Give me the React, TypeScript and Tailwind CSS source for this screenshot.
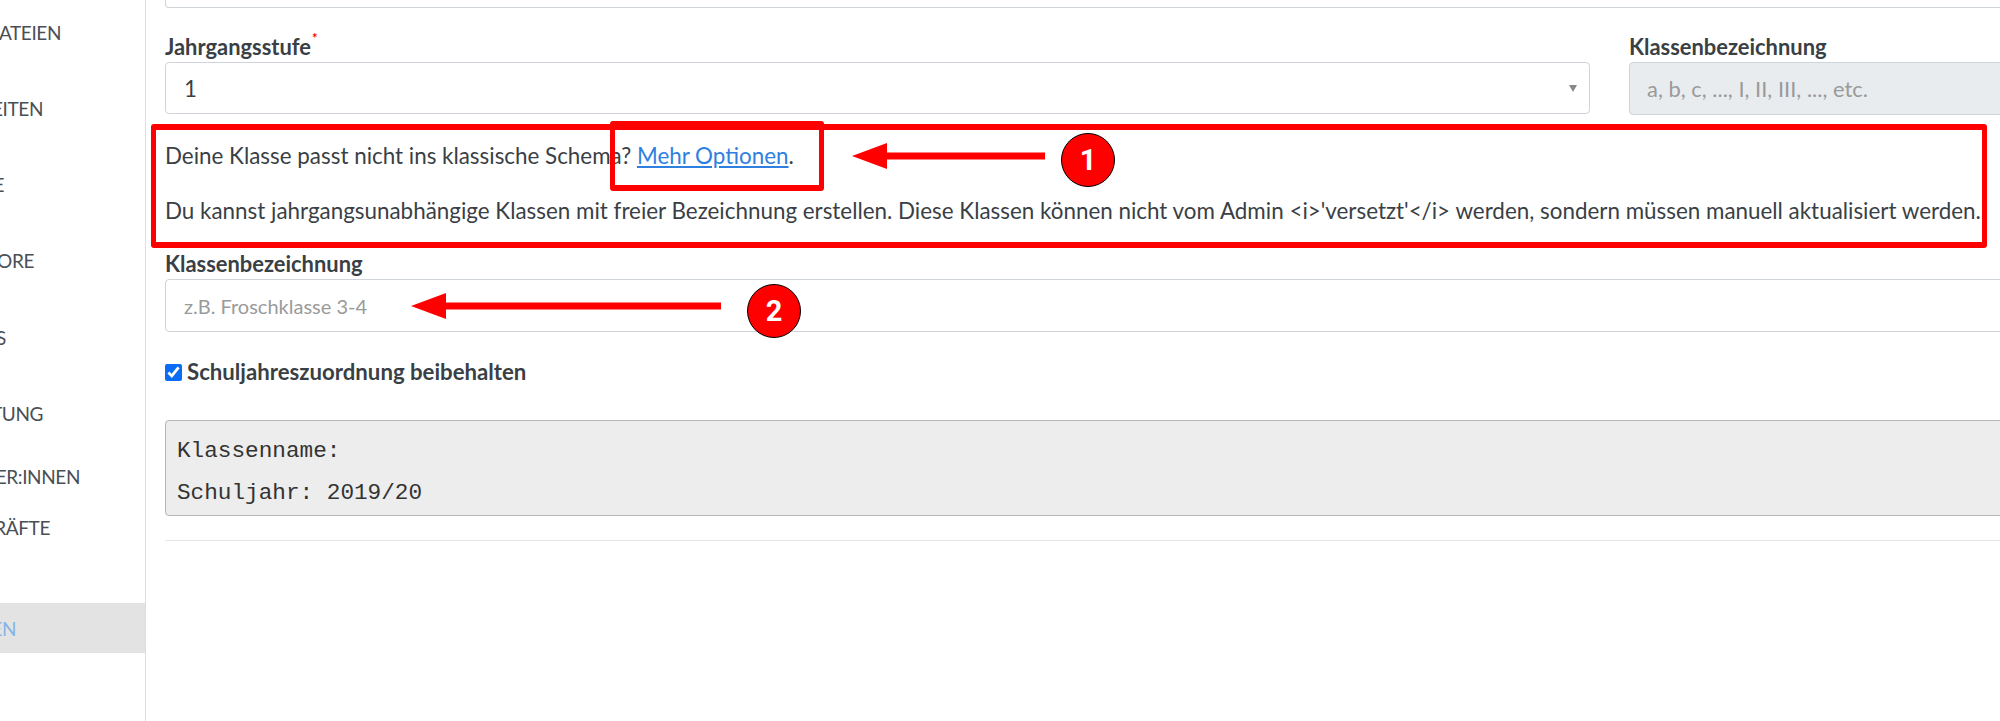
const sidebarItems = [
  { label: "ATEIEN", top: "mt-[7px]", width: "w-[61px]" },
  { label: "EITEN", top: "mt-[26px]", width: "w-[43px]" },
  { label: "E", top: "mt-[26px]", width: "w-[4px]" },
  { label: "ORE", top: "mt-[26px]", width: "w-[34px]" },
  { label: "S", top: "mt-[27px]", width: "w-[6px]" },
  { label: "TUNG", top: "mt-[26px]", width: "w-[43px]" },
  { label: "ER:INNEN", top: "mt-[13px]", width: "w-[80px]" },
  { label: "RÄFTE", top: "mt-[1px]", width: "w-[50px]" },
];

function Sidebar() {
  return (
    <aside className="w-[146px] shrink-0 border-r border-[#dedede] text-[19px] leading-none tracking-[-0.4px] text-[#4a4f55]">
      {sidebarItems.map((item) => (
        <div key={item.label} className={`flex h-[50px] items-center ${item.top}`}>
          <div className={`flex justify-end whitespace-nowrap ${item.width}`}>{item.label}</div>
        </div>
      ))}
      <div className="mt-[51px] flex h-[50px] items-center bg-[#e3e3e3] text-[#86b3e6]">
        <div className="flex w-[16px] justify-end">EN</div>
      </div>
    </aside>
  );
}

function Arrow({ className, width }: { className: string; width: number }) {
  return (
    <svg className={`absolute ${className}`} width={width} height={26} viewBox={`0 0 ${width} 26`}>
      <polygon points={`0,13 35,0 35,9.5 ${width},9.5 ${width},16.5 35,16.5 35,26`} fill="#ff0000" />
    </svg>
  );
}

function Badge({ className, n }: { className: string; n: number }) {
  return (
    <div
      className={`absolute flex h-[54px] w-[54px] items-center justify-center rounded-full border border-black bg-[#ff0000] text-[29px] font-bold text-white [font-family:Roboto,sans-serif] ${className}`}
    >
      {n}
    </div>
  );
}

export default function App() {
  return (
    <div className="relative flex h-[721px] w-[2000px] overflow-hidden bg-white text-[22.4px] leading-[30px] text-[#3a3f45] [font-family:Lato,sans-serif]">
      <Sidebar />
      <main className="min-w-0 flex-1 pl-[19px]">
        <div className="-mr-2 h-[8px] rounded-b border border-t-0 border-[#ced4da]" />

        <div className="mt-[23px] grid grid-cols-[1425px_1fr] gap-x-[39px]">
          <div>
            <label className="relative block h-[31px] pt-px text-[21.9px] font-bold">
              Jahrgangsstufe
              <span className="absolute left-[147px] top-[-8px] text-[13px] text-[#ff0000]">*</span>
            </label>
            <div className="flex h-[52px] items-center justify-between rounded border border-[#ced4da] pl-[18px] pr-[12px]">
              <span className="pt-px">1</span>
              <span className="h-0 w-0 border-x-[4px] border-t-[7px] border-x-transparent border-t-[#888]" />
            </div>
          </div>
          <div className="-mr-2">
            <label className="block h-[31px] pt-px text-[21.9px] font-bold">Klassenbezeichnung</label>
            <input
              disabled
              placeholder="a, b, c, ..., I, II, III, ..., etc."
              className="h-[53px] w-full rounded border border-[#ced4da] bg-[#e9ecef] px-[17px] text-[21.9px] placeholder:text-[#9a9a9a]"
            />
          </div>
        </div>

        <p className="mt-[26px]">
          Deine Klasse passt nicht ins klassische Schema?{" "}
          <a href="#" className="text-[#2f7fe0] underline">
            Mehr Optionen
          </a>
          .
        </p>
        <p className="mt-[25px] whitespace-nowrap">
          Du kannst jahrgangsunabhängige Klassen mit freier Bezeichnung erstellen. Diese Klassen können nicht vom Admin
          {" <i>'versetzt'</i> "}werden, sondern müssen manuell aktualisiert werden.
        </p>

        <label className="mt-[23px] block h-[30px] text-[21.9px] font-bold">Klassenbezeichnung</label>
        <input
          placeholder="z.B. Froschklasse 3-4"
          className="-mr-2 block h-[53px] w-[calc(100%+8px)] rounded border border-[#ced4da] px-[18px] text-[20px] placeholder:text-[#9a9a9a]"
        />

        <label className="mt-[28px] flex h-[24px] items-center gap-[5px] text-[22.2px] font-bold">
          <input type="checkbox" defaultChecked className="h-[17px] w-[17px] accent-[#0a6cf5]" />
          Schuljahreszuordnung beibehalten
        </label>

        <pre className="-mr-2 mt-[36px] h-[96px] rounded border border-[#b5b5b5] bg-[#ededed] px-[11px] pt-[9px] text-[22.7px] leading-[42px] text-[#333] [font-family:'Liberation_Mono',monospace]">
          {"Klassenname:\nSchuljahr: 2019/20"}
        </pre>
        <hr className="mt-[24px] border-[#e5e5e5]" />
      </main>

      {/* annotations on top of the screenshot */}
      <div className="absolute left-[151px] top-[124px] h-[124px] w-[1836px] rounded-[3px] border-x-[5px] border-y-[6px] border-[#ff0000]" />
      <div className="absolute left-[610px] top-[121px] h-[70px] w-[214px] rounded-[3px] border-x-[5px] border-y-[6px] border-[#ff0000]" />
      <Arrow className="left-[852px] top-[143px]" width={193} />
      <Arrow className="left-[411px] top-[293px]" width={310} />
      <Badge className="left-[1061px] top-[133px]" n={1} />
      <Badge className="left-[747px] top-[284px]" n={2} />
    </div>
  );
}
